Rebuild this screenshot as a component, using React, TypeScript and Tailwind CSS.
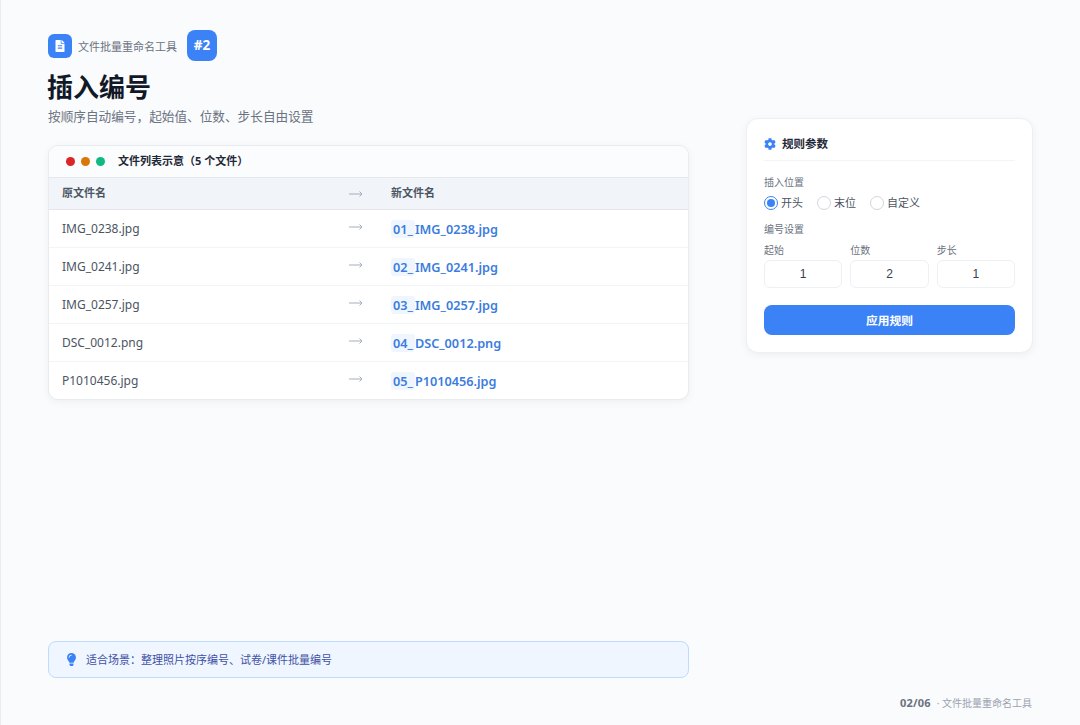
import { FaCog, FaFileAlt, FaLightbulb } from 'react-icons/fa';

const files = [
    { from: 'IMG_0238.jpg', prefix: '01_', to: 'IMG_0238.jpg' },
    { from: 'IMG_0241.jpg', prefix: '02_', to: 'IMG_0241.jpg' },
    { from: 'IMG_0257.jpg', prefix: '03_', to: 'IMG_0257.jpg' },
    { from: 'DSC_0012.png', prefix: '04_', to: 'DSC_0012.png' },
    { from: 'P1010456.jpg', prefix: '05_', to: 'P1010456.jpg' },
];

function Arrow() {
    return (
        <svg width="14" height="8" viewBox="0 0 14 8" fill="none" stroke="#a5adbb" strokeWidth="1">
            <path d="M0 4H13M10.5 1.5L13 4L10.5 6.5" />
        </svg>
    );
}

function Radio({ label, checked }: { label: string; checked?: boolean }) {
    return (
        <div className="flex items-center gap-[3px]">
            {checked ? (
                <span className="flex h-[14px] w-[14px] items-center justify-center rounded-full border-[1.5px] border-[#3b82f6] bg-white">
                    <span className="h-[8px] w-[8px] rounded-full bg-[#3b82f6]" />
                </span>
            ) : (
                <span className="h-[14px] w-[14px] rounded-full border-[1.5px] border-[#d1d5db] bg-white" />
            )}
            <span className="text-[11px] leading-[14px] text-[#4b5563]">{label}</span>
        </div>
    );
}

function NumberField({ label, value }: { label: string; value: string }) {
    return (
        <div className="flex flex-col">
            <span className="mb-[3px] text-[10px] leading-[14px] text-[#6b7280]">{label}</span>
            <div className="flex h-[28px] items-center justify-center rounded-md border border-[#edf0f4] bg-white font-['Liberation_Sans',sans-serif] text-[12px] text-[#374151]">
                {value}
            </div>
        </div>
    );
}

export default function App() {
    return (
        <div className="flex h-[725px] w-[1080px] flex-col overflow-hidden border-l border-[#e9edf3] bg-[#f9fbfd] pt-[30px] pr-[47px] pl-[47px] font-['Noto_Sans','Noto_Sans_CJK_SC',sans-serif]">
            <div className="flex flex-1 gap-[57px]">
                <div className="flex w-[641px] flex-col">
                    <div className="flex h-[31px] items-center">
                        <div className="flex h-[24px] w-[24px] items-center justify-center rounded-md bg-[#3b82f6]">
                            <FaFileAlt size={12} className="text-white" />
                        </div>
                        <span className="mt-[3px] ml-[6px] text-[11px] text-[#6b7280]">文件批量重命名工具</span>
                        <div className="ml-[10px] flex h-[31px] w-[30px] items-center justify-center rounded-lg bg-[#3b82f6] text-[13.5px] font-bold text-white">
                            #2
                        </div>
                    </div>
                    <h1 className="mt-[8px] -ml-[1px] text-[26px] leading-[36px] font-bold text-[#111827]">插入编号</h1>
                    <p className="mt-[2px] text-[12.65px] leading-[18px] text-[#6b7280]">按顺序自动编号，起始值、位数、步长自由设置</p>

                    <div className="mt-[20px] overflow-hidden rounded-[10px] border border-[#e8ebef] bg-white shadow-[0_2px_8px_rgba(0,0,0,0.05)]">
                        <div className="flex h-[31px] items-center gap-[6px] bg-[#fbfcfd] pl-[17px]">
                            <span className="h-[9px] w-[9px] rounded-full bg-[#dc2626]" />
                            <span className="h-[9px] w-[9px] rounded-full bg-[#d97706]" />
                            <span className="h-[9px] w-[9px] rounded-full bg-[#10b981]" />
                            <span className="ml-[7px] text-[11px] font-bold text-[#1f2937]">文件列表示意（5 个文件）</span>
                        </div>
                        <div className="grid h-[33px] grid-cols-[279px_56px_1fr] items-center border-y border-[#e5e7eb] bg-[#f1f5f9] text-[11px] font-bold text-[#4b5563]">
                            <span className="pl-[13px]">原文件名</span>
                            <span className="flex justify-center"><Arrow /></span>
                            <span className="pl-[7px]">新文件名</span>
                        </div>
                        {files.map((file, i) => (
                            <div
                                key={file.prefix}
                                className={`grid grid-cols-[279px_56px_1fr] items-center ${i < files.length - 1 ? 'h-[38px] border-b border-[#f3f4f6]' : 'h-[37px]'}`}
                            >
                                <span className="pl-[13px] text-[12px] text-[#4b5563]">{file.from}</span>
                                <span className="flex justify-center pb-[3px]"><Arrow /></span>
                                <span className="pt-[2px] pl-[7px] text-[12.7px] font-semibold text-[#3b7ddd]">
                                    <span className="rounded-[3px] bg-[#eff6ff] px-[2px]">{file.prefix}</span>
                                    {file.to}
                                </span>
                            </div>
                        ))}
                    </div>

                    <div className="mt-auto mb-[18px] flex h-[37px] items-center gap-[8px] rounded-lg border border-[#bfdbfe] bg-[#eff6ff] pl-[16px]">
                        <FaLightbulb size={13} className="text-[#3b82f6]" />
                        <span className="mt-[2px] text-[11px] text-[#3f51a5]">适合场景：整理照片按序编号、试卷/课件批量编号</span>
                    </div>
                </div>

                <div className="pt-[88px]">
                    <div className="w-[287px] rounded-xl border border-[#eceff3] bg-white px-[17px] pt-[16px] pb-[17px] shadow-[0_2px_8px_rgba(0,0,0,0.05)]">
                        <div className="flex items-center gap-[6px] border-b border-[#f3f4f6] pb-[7px]">
                            <FaCog size={12} className="text-[#3b82f6]" />
                            <span className="text-[11.5px] leading-[18px] font-bold text-[#1f2937]">规则参数</span>
                        </div>
                        <div className="mt-[14px] text-[10px] leading-[14px] text-[#6b7280]">插入位置</div>
                        <div className="mt-[7px] flex gap-[14px]">
                            <Radio label="开头" checked />
                            <Radio label="末位" />
                            <Radio label="自定义" />
                        </div>
                        <div className="mt-[12px] text-[10px] leading-[14px] text-[#6b7280]">编号设置</div>
                        <div className="mt-[7px] grid grid-cols-3 gap-[8px]">
                            <NumberField label="起始" value="1" />
                            <NumberField label="位数" value="2" />
                            <NumberField label="步长" value="1" />
                        </div>
                        <button className="mt-[17px] h-[30px] w-full rounded-lg bg-[#3b82f6] pt-[2px] text-[11.75px] font-bold text-white">
                            应用规则
                        </button>
                    </div>
                </div>
            </div>
            <div className="mb-[15px] flex justify-end pr-[1px] text-[10px] leading-[14px] text-[#9ca3af]">
                <span className="text-[11px] font-bold tracking-[0.2px] text-[#6b7280]">02/06</span>
                <span className="ml-[6px]">· 文件批量重命名工具</span>
            </div>
        </div>
    );
}
